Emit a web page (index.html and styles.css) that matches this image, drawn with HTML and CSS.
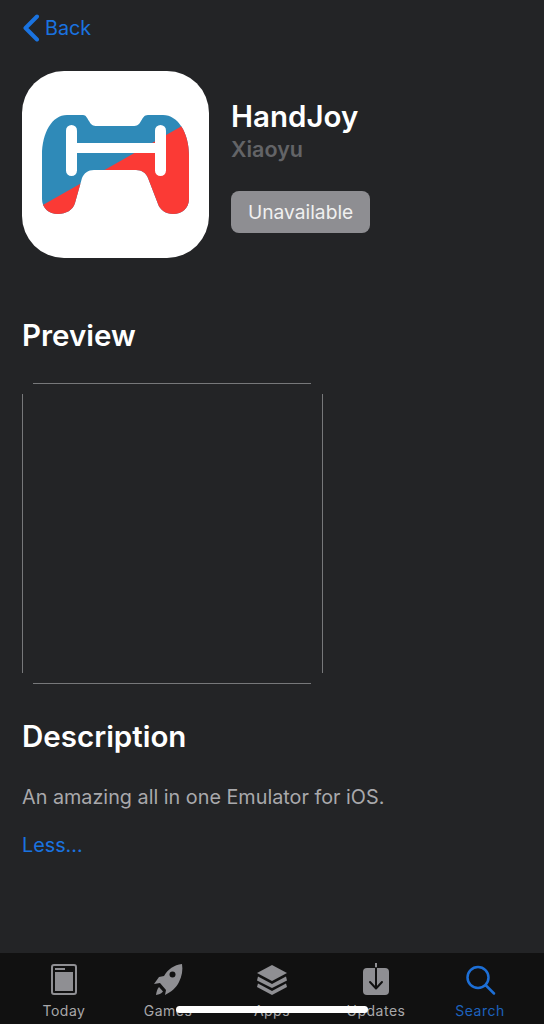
FILE: index.html
```html
<!DOCTYPE html>
<html>
<head>
<meta charset="utf-8">
<title>HandJoy</title>
<link rel="stylesheet" href="styles.css">
</head>
<body>

<div class="screen">
  <div class="content">
    <a class="back" href="#">
      <svg class="chevron" viewBox="0 0 18 28" width="18" height="28"><path d="M15 2.5 3.5 14 15 25.5" fill="none" stroke="#1a73e0" stroke-width="4" stroke-linecap="round" stroke-linejoin="round"/></svg>
      <span>Back</span>
    </a>

    <div class="app">
      <svg class="app-icon" viewBox="22 71 187 187" width="187" height="187">
        <defs>
          <clipPath id="pad">
            <path d="M67 115H83C86 115 87 118 89 121 91 125 93 126 97 126H133C137 126 139 125 141 121 143 118 144 115 148 115H163C178 115 189 133 189 155V199C189 208 182 214 173 214 166 214 160 210 158 204L148 178C146 173 142 170 136 170H94C88 170 84 173 82 178L75 203C73 210 66 214 58 214 49 214 42 208 42 199V155C42 133 52 115 67 115Z"/>
          </clipPath>
        </defs>
        <rect x="22" y="71" width="187" height="187" rx="42" fill="#fff"/>
        <g clip-path="url(#pad)">
          <rect x="40" y="110" width="152" height="108" fill="#2f8ab8"/>
          <path d="M36 209 196 118V220H36Z" fill="#fb3a35"/>
        </g>
        <rect x="66" y="125" width="11" height="51" rx="5.5" fill="#fff"/>
        <rect x="155" y="125" width="11" height="51" rx="5.5" fill="#fff"/>
        <rect x="70" y="143" width="92" height="10" fill="#fff"/>
      </svg>
      <div class="app-info">
        <h1 class="app-name">HandJoy</h1>
        <div class="app-author">Xiaoyu</div>
        <div class="status-btn">Unavailable</div>
      </div>
    </div>

    <h2 class="preview-title">Preview</h2>
    <div class="preview">
      <div class="edge edge-top"></div>
      <div class="edge edge-left"></div>
      <div class="edge edge-right"></div>
      <div class="edge edge-bottom"></div>
    </div>

    <h2 class="desc-title">Description</h2>
    <p class="desc">An amazing all in one Emulator for iOS.</p>
    <a class="less" href="#">Less...</a>
  </div>

  <div class="tabbar">
    <div class="tab">
      <svg viewBox="0 0 30 34" width="30" height="34"><rect x="3" y="2" width="24" height="29" rx="2" fill="none" stroke="#8f8f93" stroke-width="2"/><rect x="6" y="9" width="18" height="19" fill="#8f8f93"/><rect x="6" y="5" width="10" height="2" fill="#8f8f93"/></svg>
      <span>Today</span>
    </div>
    <div class="tab">
      <svg viewBox="0 0 32 34" width="32" height="34"><path d="M30 1C22 2 16 6 12 13L7 14 2 21 8 20 14 27 13 32C19 29 24 25 27 19 30 13 31 7 30 1Z" fill="#8f8f93"/><circle cx="20.5" cy="11.5" r="3" fill="#111"/><path d="M7 24C5 26 4.500 29 4 32 7 31.500 9 31 11 28.500Z" fill="#8f8f93"/></svg>
      <span>Games</span>
    </div>
    <div class="tab">
      <svg viewBox="0 0 32 34" width="32" height="34"><path d="M16 2 31 10 16 18 1 10Z" fill="#8f8f93"/><path d="M2 13.500 16 21 30 13.500 31 17.500 16 25 1 17.500Z" fill="#8f8f93"/><path d="M2 20.500 16 28 30 20.500 31 24 16 32 1 24Z" fill="#8f8f93"/></svg>
      <span>Apps</span>
    </div>
    <div class="tab">
      <svg viewBox="0 0 30 34" width="30" height="34"><rect x="2" y="5" width="26" height="27" rx="4" fill="#8f8f93"/><path d="M15 0V5" stroke="#8f8f93" stroke-width="2"/><path d="M15 5V25M9 19 15 25.500 21 19" fill="none" stroke="#111" stroke-width="2" stroke-linecap="round" stroke-linejoin="round"/></svg>
      <span>Updates</span>
    </div>
    <div class="tab tab-active">
      <svg viewBox="0 0 32 34" width="32" height="34"><circle cx="14" cy="14.500" r="10.500" fill="none" stroke="#1d6fd6" stroke-width="2.500"/><path d="M22 22.500 30 30.500" stroke="#1d6fd6" stroke-width="2.500" stroke-linecap="round"/></svg>
      <span>Search</span>
    </div>
  </div>

  <div class="home-bar"></div>
</div>

</body>
</html>
```

FILE: styles.css
```css
html, body {margin: 0; padding: 0;}
body {background: #232426; font-family: Inter, "Liberation Sans", sans-serif;}
a {text-decoration: none;}

.screen {position: relative; width: 544px; height: 1024px; overflow: hidden; display: flex; flex-direction: column;}
.content {flex: 1; padding: 14px 22px 0;}

.back {display: flex; align-items: center; gap: 5px; height: 28px; color: #1a73e0; font-size: 19.800px;}
.chevron {flex: none;}

.app {display: flex; margin-top: 29px;}
.app-icon {flex: none; display: block;}
.app-info {margin-left: 22px; padding-top: 27px;}
.app-name {margin: 0; font-size: 29.500px; line-height: 36px; font-weight: 600; color: #fff;}
.app-author {margin-top: 1px; font-size: 21.500px; line-height: 28px; font-weight: 600; color: #636467;}
.status-btn {display: inline-block; margin-top: 28px; padding: 0 17px; height: 42px; line-height: 42px; border-radius: 8px; background: #8e8e92; color: #f0f0f0; font-size: 19.200px;}

.preview-title, .desc-title {margin: 0; font-size: 29.500px; line-height: 36px; font-weight: 600; color: #fff;}
.preview-title {margin-top: 59px;}
.desc-title {margin-top: 34px;}

.preview {display: grid; grid-template-columns: 11px 278px 12px; grid-template-rows: 11px 279px 11px; width: 301px; margin-top: 30px;}
.edge-top {grid-column: 2; grid-row: 1; border-top: 1px solid #77787a;}
.edge-left {grid-column: 1; grid-row: 2; border-left: 1px solid #77787a;}
.edge-right {grid-column: 3; grid-row: 2; border-right: 1px solid #77787a;}
.edge-bottom {grid-column: 2; grid-row: 3; border-bottom: 1px solid #77787a;}

.desc {margin: 29px 0 0; font-size: 19.800px; line-height: 28px; color: #a9a9ac;}
.less {display: block; margin-top: 20px; font-size: 19.800px; line-height: 28px; color: #1a73e0;}

.tabbar {flex: none; height: 71px; background: #111; display: grid; grid-template-columns: repeat(5, 104px); padding: 0 12px;}
.tab {display: flex; flex-direction: column; align-items: center; padding-top: 10px; color: #a8a8aa; font-size: 14px; line-height: 18px; letter-spacing: 0.5px;}
.tab svg {display: block; margin-bottom: 5px;}
.tab-active {color: #1d62bd;}

.home-bar {position: absolute; left: 176px; top: 1006px; width: 192px; height: 7px; border-radius: 4px; background: #fff;}
```
